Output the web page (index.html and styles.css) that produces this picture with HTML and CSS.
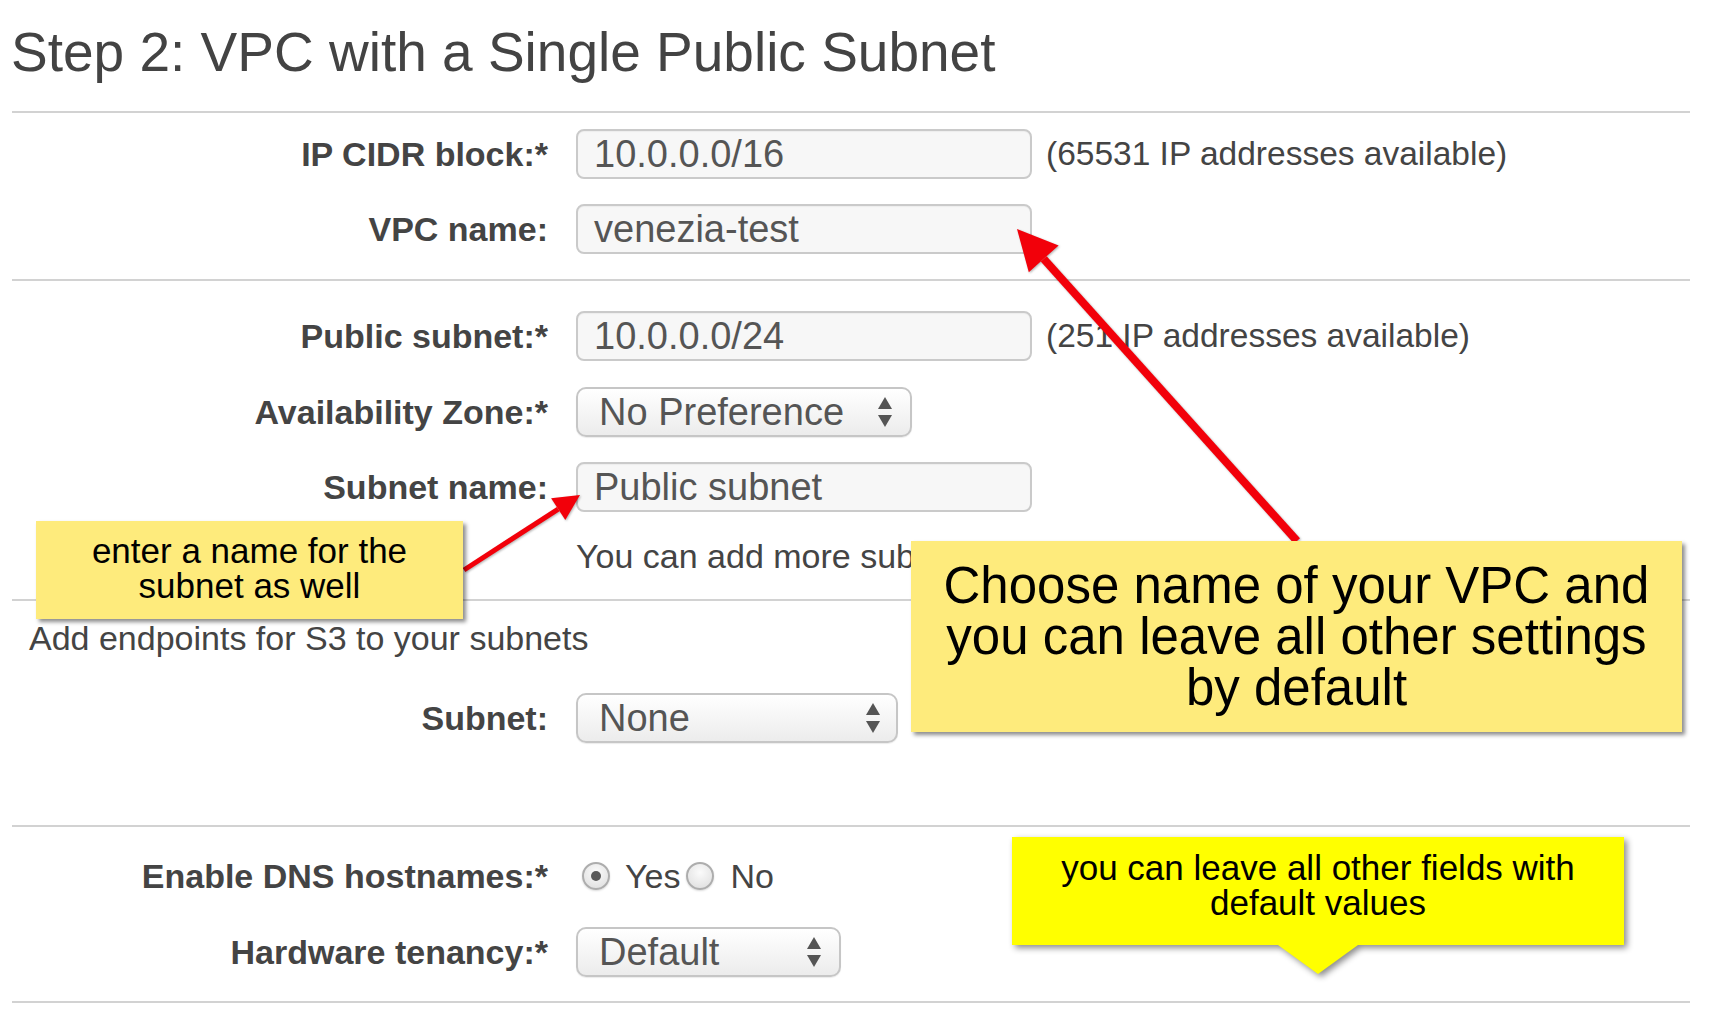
FILE: index.html
```html
<!DOCTYPE html>
<html lang="en">
<head>
<meta charset="utf-8">
<title>Step 2: VPC with a Single Public Subnet</title>
<link rel="stylesheet" href="styles.css">
</head>
<body>
<main class="page">
  <h1 class="title">Step 2: VPC with a Single Public Subnet</h1>

  <section class="sec sec1">
    <div class="row">
      <div class="label">IP CIDR block:*</div>
      <div class="field input w-input">10.0.0.0/16</div>
      <div class="info">(65531 IP addresses available)</div>
    </div>
    <div class="row row-gap25">
      <div class="label">VPC name:</div>
      <div class="field input w-input">venezia-test</div>
    </div>
  </section>

  <section class="sec sec2">
    <div class="row">
      <div class="label">Public subnet:*</div>
      <div class="field input w-input">10.0.0.0/24</div>
      <div class="info">(251 IP addresses available)</div>
    </div>
    <div class="row row-gap26">
      <div class="label">Availability Zone:*</div>
      <div class="field select w-az"><span>No Preference</span>
        <svg class="updown" viewBox="0 0 14 30" width="14" height="30"><polygon points="0,12 7,0 14,12"/><polygon points="0,18 14,18 7,30"/></svg>
      </div>
    </div>
    <div class="row row-gap25">
      <div class="label">Subnet name:</div>
      <div class="field input w-input">Public subnet</div>
    </div>
    <div class="help"><span class="help-clip">You can add more subnets after AWS creates the VPC.</span></div>
  </section>

  <section class="sec sec3">
    <p class="endpoints">Add endpoints for S3 to your subnets</p>
    <div class="row row-gap37">
      <div class="label">Subnet:</div>
      <div class="field select w-subnet"><span>None</span>
        <svg class="updown" viewBox="0 0 14 30" width="14" height="30"><polygon points="0,12 7,0 14,12"/><polygon points="0,18 14,18 7,30"/></svg>
      </div>
    </div>
  </section>

  <section class="sec sec4">
    <div class="row">
      <div class="label">Enable DNS hostnames:*</div>
      <div class="radios">
        <span class="radio checked"></span><span class="radio-text">Yes</span>
        <span class="radio"></span><span class="radio-text no">No</span>
      </div>
    </div>
    <div class="row row-gap26">
      <div class="label">Hardware tenancy:*</div>
      <div class="field select w-tenancy"><span>Default</span>
        <svg class="updown" viewBox="0 0 14 30" width="14" height="30"><polygon points="0,12 7,0 14,12"/><polygon points="0,18 14,18 7,30"/></svg>
      </div>
    </div>
  </section>

  <svg class="arrows" viewBox="0 0 1710 1036" width="1710" height="1036">
    <g class="arrow">
      <line x1="1043.7" y1="258.8" x2="1297" y2="541" stroke-width="8"/>
      <polygon points="1017,229 1028.8,272.2 1058.6,245.4"/>
      <line x1="558.2" y1="509.1" x2="464" y2="570" stroke-width="5"/>
      <polygon points="580,495 551.1,498.2 565.3,520"/>
    </g>
  </svg>

  <div class="note note-small">enter a name for the<br>subnet as well</div>
  <div class="note note-big">Choose name of your VPC and<br>you can leave all other settings<br>by default</div>
  <div class="callout"><div class="callout-box">you can leave all other fields with<br>default values</div></div>
</main>
</body>
</html>
```

FILE: styles.css
```css
html, body {
  margin: 0;
  padding: 0;
  background: #ffffff;
}

body {
  font-family: "Liberation Sans", Arial, Helvetica, sans-serif;
  color: #444444;
  width: 1710px;
  height: 1036px;
  overflow: hidden;
}

.page {
  position: relative;
  width: 1710px;
  height: 1036px;
  padding: 20px 20px 0 12px;
  box-sizing: border-box;
}

.title {
  margin: 0 0 27px -1px;
  font-size: 55px;
  line-height: 64px;
  font-weight: normal;
  color: #434343;
  white-space: nowrap;
}

.sec {
  border-top: 2px solid #d2d2d2;
}

.sec1 { padding: 16px 0 25px; }
.sec2 { padding: 30px 0 23px; }
.sec3 { padding: 19px 0 82px; }
.sec4 { padding: 24px 0 24px; border-bottom: 2px solid #d2d2d2; }

.row {
  display: flex;
  align-items: center;
  height: 50px;
}

.row-gap25 { margin-top: 25px; }
.row-gap26 { margin-top: 26px; }
.row-gap37 { margin-top: 37px; }

.label {
  width: 536px;
  margin-right: 28px;
  text-align: right;
  font-size: 34px;
  font-weight: bold;
  color: #444444;
  white-space: nowrap;
}

.field {
  box-sizing: border-box;
  height: 50px;
  display: flex;
  align-items: center;
  font-size: 38px;
  color: #555555;
  white-space: nowrap;
}

.input {
  border: 2px solid #cacaca;
  border-radius: 8px;
  background: #f7f7f7;
  padding-left: 16px;
  box-shadow: inset 0 1px 1px rgba(0, 0, 0, 0.04);
}

.select {
  border: 2px solid #c6c6c6;
  border-radius: 10px;
  background: linear-gradient(#ffffff, #ececec);
  padding-left: 21px;
  padding-right: 18px;
  justify-content: space-between;
  box-shadow: 0 1px 1px rgba(0, 0, 0, 0.08);
}

.updown {
  fill: #555555;
  flex: none;
}

.w-input { width: 456px; }
.w-az { width: 336px; }
.w-subnet { width: 322px; padding-right: 16px; }
.w-tenancy { width: 265px; }

.info {
  margin-left: 14px;
  font-size: 33.5px;
  color: #444444;
  white-space: nowrap;
}

.help {
  margin: 24px 0 0 564px;
  font-size: 34px;
  line-height: 40px;
  color: #444444;
  white-space: nowrap;
}

.help-clip {
  display: block;
  width: 335px;
  overflow: hidden;
}

.endpoints {
  margin: 0 0 0 17px;
  font-size: 34px;
  line-height: 36px;
  color: #444444;
}

.radios {
  display: flex;
  align-items: center;
  margin-left: 6px;
  font-size: 34px;
  color: #444444;
}

.radio {
  box-sizing: border-box;
  width: 28px;
  height: 28px;
  border-radius: 50%;
  border: 2px solid #adadad;
  background: radial-gradient(circle at 50% 35%, #fbfbfb, #dcdcdc);
  box-shadow: 0 1px 2px rgba(0, 0, 0, 0.15);
  display: flex;
  align-items: center;
  justify-content: center;
}

.radio.checked::after {
  content: "";
  width: 10px;
  height: 10px;
  border-radius: 50%;
  background: #5a5a5a;
}

.radio-text {
  margin-left: 15px;
  margin-right: 6px;
}

.radio-text.no {
  margin-left: 16px;
}

.arrows {
  position: absolute;
  left: 0;
  top: 0;
  pointer-events: none;
  filter: drop-shadow(1px 1px 1px rgba(0, 0, 0, 0.3));
}

.arrow line {
  stroke: #f2000a;
  stroke-linecap: butt;
}

.arrow polygon {
  fill: #f2000a;
}

.note {
  position: absolute;
  box-sizing: border-box;
  background: #feeb7c;
  color: #000000;
  text-align: center;
  box-shadow: 3px 3px 4px rgba(0, 0, 0, 0.45);
  white-space: nowrap;
}

.note-small {
  left: 36px;
  top: 521px;
  width: 427px;
  height: 98px;
  padding-top: 12px;
  font-size: 35px;
  line-height: 35px;
}

.note-big {
  left: 911px;
  top: 541px;
  width: 771px;
  height: 191px;
  padding-top: 19px;
  font-size: 51px;
  line-height: 51px;
}

.callout {
  position: absolute;
  left: 1012px;
  top: 837px;
  width: 612px;
  height: 108px;
  filter: drop-shadow(3px 3px 3px rgba(0, 0, 0, 0.45));
}

.callout-box {
  box-sizing: border-box;
  width: 100%;
  height: 100%;
  background: #ffff00;
  color: #000000;
  text-align: center;
  padding-top: 13px;
  font-size: 35px;
  line-height: 35px;
  white-space: nowrap;
}

.callout::after {
  content: "";
  position: absolute;
  left: 266px;
  top: 100%;
  width: 0;
  height: 0;
  border-left: 40px solid transparent;
  border-right: 40px solid transparent;
  border-top: 29px solid #ffff00;
}
```
